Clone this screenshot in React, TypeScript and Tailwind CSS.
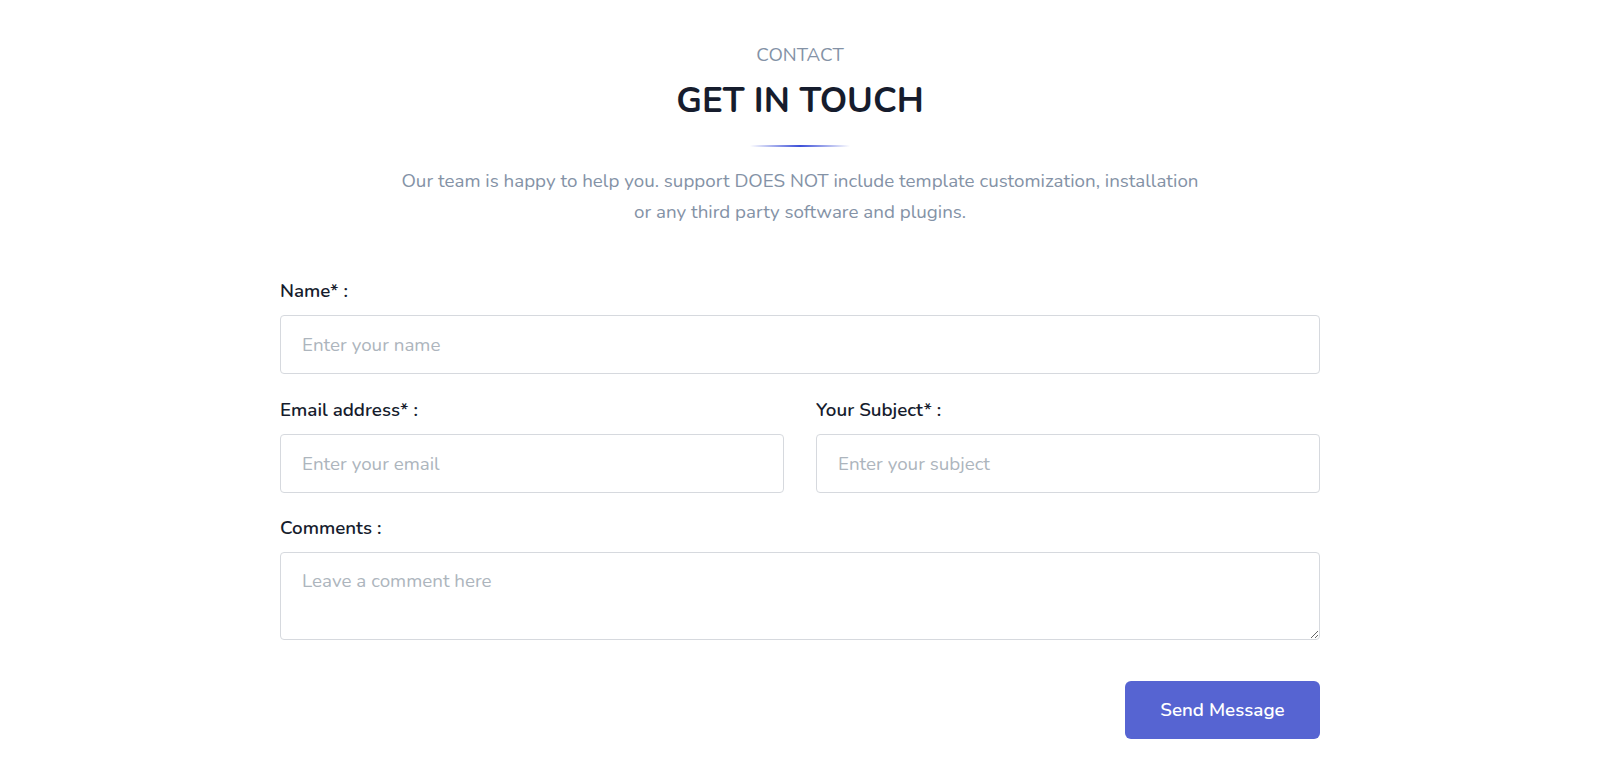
import React from "react";

const font = { fontFamily: "Nunito, 'Noto Sans', Lato, sans-serif" };

function Label({ children }: { children: React.ReactNode }) {
  return (
    <label className="block text-[18.8px] leading-[26px] font-semibold text-[#161c2d] mb-[11px]">{children}</label>
  );
}

const inputCls =
  "block w-full h-[59px] border border-[#d6d9de] rounded-[4px] px-[21px] text-[18.8px] text-[#161c2d] placeholder:text-[#adb5bd] outline-none";

export default function App() {
  return (
    <div className="bg-white pt-[41px] pb-[40px]" style={font}>
      <div className="w-[1040px] mx-auto">
        <div className="flex flex-col items-center text-center">
          <p className="text-[18.8px] leading-[28px] text-[#8492a6] uppercase">Contact</p>
          <h2 className="mt-[11px] text-[35px] leading-[42px] font-bold text-[#161c2d]">GET IN TOUCH</h2>
          <div className="mt-[23px] h-[2px] w-[100px] bg-gradient-to-r from-transparent via-[#3c4fd8] to-transparent" />
          <p className="mt-[19px] text-[18.8px] leading-[31px] text-[#8492a6] w-[860px]">
            Our team is happy to help you. support DOES NOT include template customization, installation
            <br />
            or any third party software and plugins.
          </p>
        </div>

        <form className="mt-[50px]" onSubmit={(e) => e.preventDefault()}>
          <div>
            <Label>Name* :</Label>
            <input className={inputCls} placeholder="Enter your name" />
          </div>
          <div className="mt-[23px] grid grid-cols-2 gap-[32px]">
            <div>
              <Label>Email address* :</Label>
              <input className={inputCls} placeholder="Enter your email" />
            </div>
            <div>
              <Label>Your Subject* :</Label>
              <input className={inputCls} placeholder="Enter your subject" />
            </div>
          </div>
          <div className="mt-[22px]">
            <Label>Comments :</Label>
            <textarea
              className="block w-full h-[88px] border border-[#d6d9de] rounded-[4px] px-[21px] pt-[15px] text-[18.8px] leading-[26px] text-[#161c2d] placeholder:text-[#adb5bd] outline-none"
              placeholder="Leave a comment here"
            />
          </div>
          <div className="mt-[41px] flex justify-end">
            <button className="w-[195px] h-[58px] rounded-[6px] bg-[#5664d2] text-white text-[18.8px] font-semibold">
              Send Message
            </button>
          </div>
        </form>
      </div>
    </div>
  );
}
